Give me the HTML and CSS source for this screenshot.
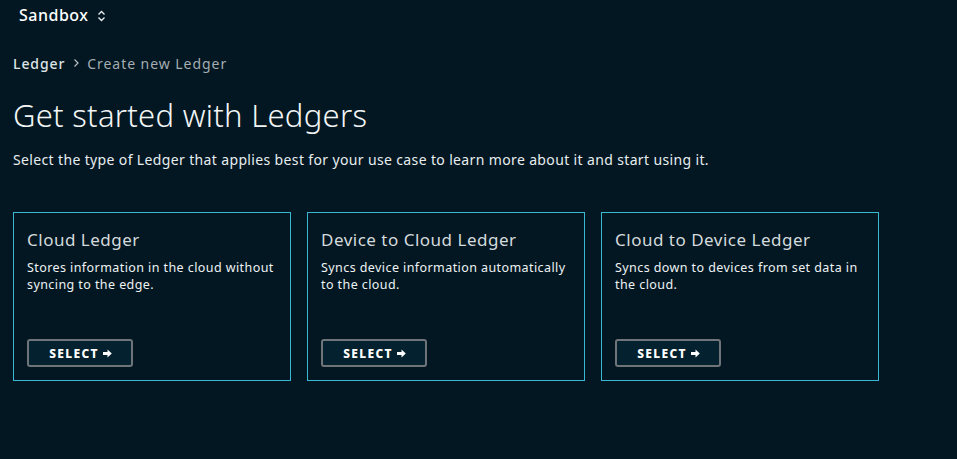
FILE: index.html
```html
<!DOCTYPE html>
<html>
<head>
<meta charset="utf-8">
<link rel="stylesheet" href="styles.css">
</head>
<body>
<header class="topbar">
  <span class="org">Sandbox</span>
  <svg class="updown" width="9" height="12" viewBox="0 0 9 12"><path d="M1.5 4.5 L4.5 1.5 L7.5 4.5 M1.5 7.5 L4.5 10.5 L7.5 7.5" fill="none" stroke="#e6ecef" stroke-width="1.4"/></svg>
</header>
<main class="page">
  <nav class="crumbs">
    <span class="crumb-link">Ledger</span>
    <svg class="sep" width="8" height="10" viewBox="0 0 8 10"><path d="M2.5 1.5 L6 5 L2.5 8.5" fill="none" stroke="#b8c0c4" stroke-width="1.2"/></svg>
    <span class="crumb-current">Create new Ledger</span>
  </nav>
  <h1 class="title">Get started with Ledgers</h1>
  <p class="lead">Select the type of Ledger that applies best for your use case to learn more about it and start using it.</p>
  <section class="cards">
    <article class="card">
      <h2 class="card-title">Cloud Ledger</h2>
      <p class="card-desc">Stores information in the cloud without syncing to the edge.</p>
      <button class="select">SELECT<svg class="arrow" width="9" height="9" viewBox="0 0 9 9"><path d="M0 3 H4.5 V0.5 L8.8 4.5 L4.5 8.5 V6 H0 Z" fill="#ffffff"/></svg></button>
    </article>
    <article class="card">
      <h2 class="card-title">Device to Cloud Ledger</h2>
      <p class="card-desc">Syncs device information automatically to the cloud.</p>
      <button class="select">SELECT<svg class="arrow" width="9" height="9" viewBox="0 0 9 9"><path d="M0 3 H4.5 V0.5 L8.8 4.5 L4.5 8.5 V6 H0 Z" fill="#ffffff"/></svg></button>
    </article>
    <article class="card">
      <h2 class="card-title">Cloud to Device Ledger</h2>
      <p class="card-desc">Syncs down to devices from set data in the cloud.</p>
      <button class="select">SELECT<svg class="arrow" width="9" height="9" viewBox="0 0 9 9"><path d="M0 3 H4.5 V0.5 L8.8 4.5 L4.5 8.5 V6 H0 Z" fill="#ffffff"/></svg></button>
    </article>
  </section>
</main>
</body>
</html>
```
FILE: styles.css
```css
html, body {
  margin: 0;
  padding: 0;
  background: #021721;
  color: #e8edf0;
  font-family: "Noto Sans", "Open Sans", sans-serif;
  height: 100%;
}
.topbar {
  display: flex;
  align-items: center;
  gap: 9px;
  height: 30px;
  padding-left: 19px;
}
.org {
  font-size: 16px;
  font-weight: 500;
  letter-spacing: 0.5px;
  color: #ffffff;
}
.updown { margin-top: 2px; }
.page {
  padding: 0 13px;
}
.crumbs {
  display: flex;
  align-items: center;
  gap: 7px;
  margin-top: 23px;
  font-size: 14px;
  height: 20px;
}
.crumb-link { color: #dfe4e7; font-weight: 500; letter-spacing: 0.9px; }
.crumb-current { color: #a5adb2; letter-spacing: 0.95px; }
.title {
  margin: 22px 0 0;
  font-size: 31px;
  font-weight: 300;
  letter-spacing: 0.28px;
  color: #f2f5f6;
  line-height: 40px;
}
.lead {
  margin: 15px 0 0;
  font-size: 14px;
  letter-spacing: 0.36px;
  color: #e8edf0;
  line-height: 20px;
}
.cards {
  display: flex;
  gap: 16px;
  margin-top: 42px;
}
.card {
  box-sizing: border-box;
  width: 278px;
  height: 169px;
  border: 1px solid #3ab7d2;
  padding: 16px 13px 13px;
  display: flex;
  flex-direction: column;
}
.card-title {
  margin: 0;
  font-size: 17px;
  font-weight: 400;
  letter-spacing: 0.5px;
  color: #d4dadd;
  line-height: 22px;
}
.card-desc {
  margin: 8px 0 0;
  font-size: 12.5px;
  letter-spacing: 0.42px;
  line-height: 17px;
  color: #eef2f4;
}
.select {
  margin-top: auto;
  align-self: flex-start;
  box-sizing: border-box;
  width: 106px;
  height: 28px;
  border: 2px solid #6f7479;
  border-radius: 3px;
  background: #03212e;
  color: #ffffff;
  font-family: "Noto Sans", sans-serif;
  font-size: 12px;
  font-weight: 800;
  letter-spacing: 1.3px;
  display: flex;
  align-items: center;
  justify-content: center;
  gap: 4px;
  padding: 0 0 0 1px;
}
.arrow { display: block; }
```
